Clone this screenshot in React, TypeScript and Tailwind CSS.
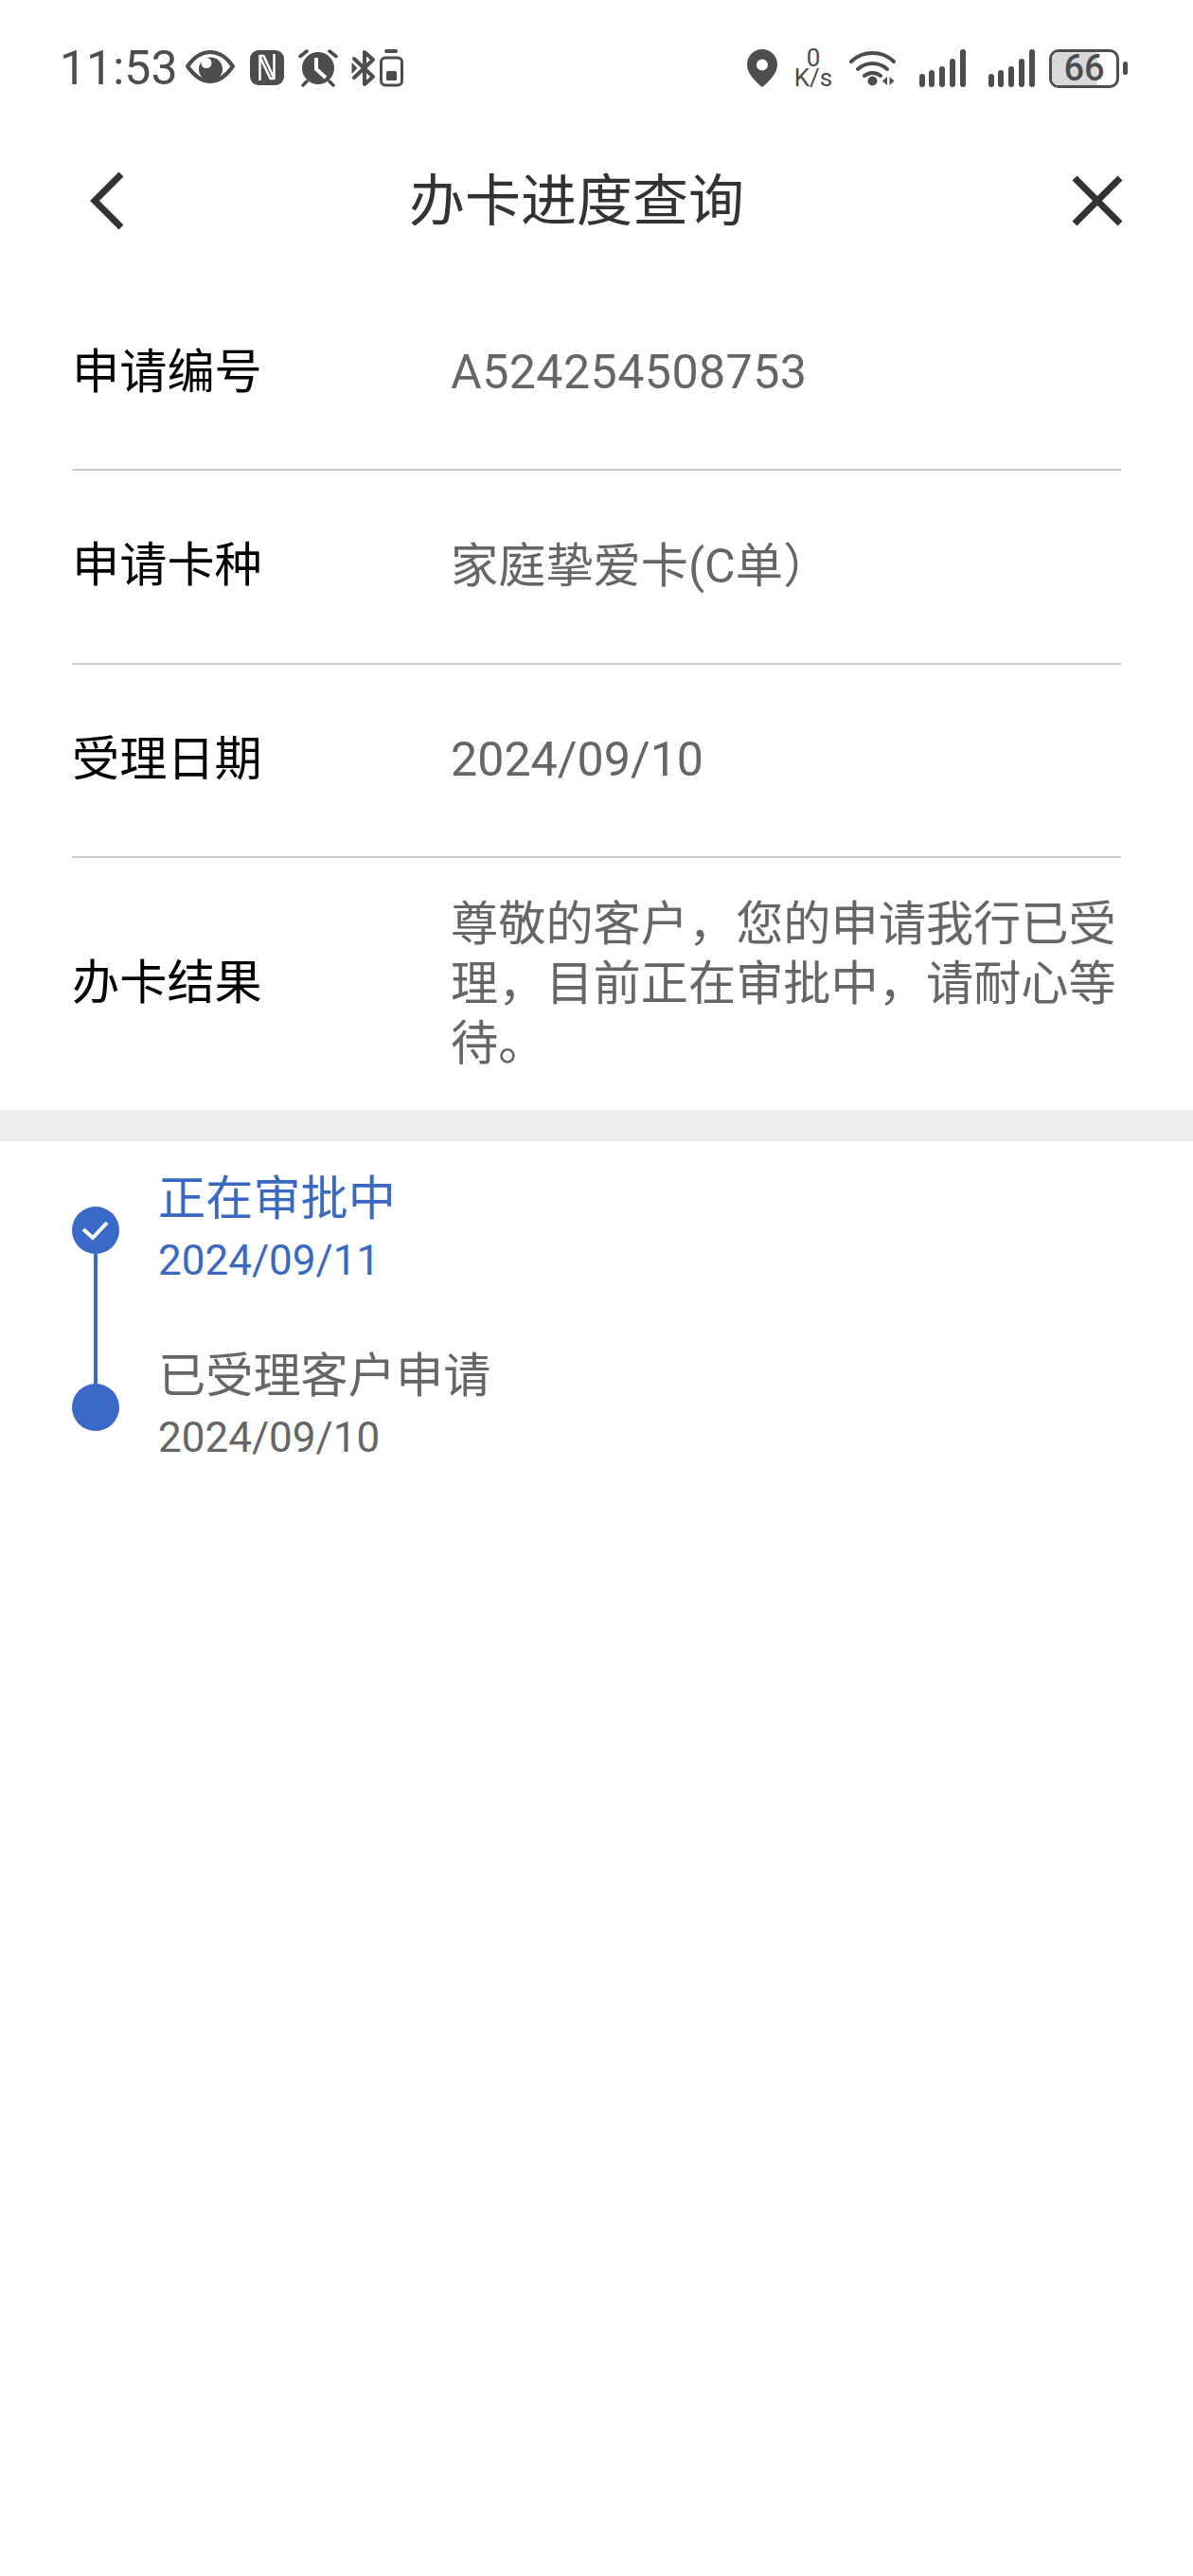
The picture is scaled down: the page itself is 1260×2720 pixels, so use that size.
import React from "react";

const FONT = "font-['Roboto','Noto_Sans_CJK_SC',sans-serif]";
const INK = "#4d4d4d";

function Eye() {
  return (
    <svg width="54" height="40" viewBox="0 0 54 40" className="ml-[7px]">
      <path d="M3 18C10 8 18 3 27 3S44 8 51 18C44 28 36 34 27 34S10 28 3 18Z" fill="none" stroke={INK} strokeWidth="4" strokeLinejoin="round" />
      <circle cx="27.500" cy="21" r="12.500" fill={INK} />
      <circle cx="23" cy="14.500" r="5.500" fill="#fff" />
    </svg>
  );
}

function Nfc() {
  return (
    <svg width="36" height="40" viewBox="0 0 36 40" className="ml-[15px]">
      <rect x="0" y="1" width="36" height="37" rx="9" fill={INK} />
      <path d="M10.500 33V7h4l11 24M25.500 5v26h-4L10.500 8" fill="none" stroke="#fff" strokeWidth="2.500" strokeLinejoin="round" />
    </svg>
  );
}

function Alarm() {
  return (
    <svg width="42" height="40" viewBox="0 0 42 40" className="ml-[15px]">
      <circle cx="21" cy="20" r="17" fill={INK} />
      <path d="M2 7.500l7-5.500M40 7.500l-7-5.500M5 38l4-4M37 38l-4-4" stroke={INK} strokeWidth="3.500" strokeLinecap="round" />
      <path d="M19 9v12l10 9" fill="none" stroke="#fff" strokeWidth="4" strokeLinejoin="round" />
    </svg>
  );
}

function BluetoothBattery() {
  return (
    <svg width="56" height="40" viewBox="0 0 56 40" className="ml-[14px]">
      <path d="M3 10l20 19-9 8V3l9 8L3 30" fill="none" stroke={INK} strokeWidth="4" strokeLinejoin="round" strokeLinecap="round" />
      <path d="M0.500 14v12l6-6Z" fill={INK} />
      <rect x="35" y="0" width="14" height="4" rx="2" fill={INK} />
      <rect x="31.500" y="9" width="22" height="29" rx="4.500" fill="none" stroke={INK} strokeWidth="3" />
      <rect x="37" y="23" width="11" height="10" rx="1.500" fill={INK} />
    </svg>
  );
}

function Pin() {
  return (
    <svg width="32" height="40" viewBox="0 0 32 40">
      <path fillRule="evenodd" d="M16 0C7 0 0 7 0 16c0 10 9 18 16 24 7-6 16-14 16-24C32 7 25 0 16 0Zm0 10.500a6 6 0 1 1 0 12 6 6 0 0 1 0-12Z" fill={INK} />
    </svg>
  );
}

function Wifi() {
  return (
    <svg width="50" height="40" viewBox="0 0 50 40" className="ml-[18px]">
      <path d="M2 13C14 1 35 1 47 13M9 21c9-8 22-8 31 0M16 28c5-4 12-4 17 0" fill="none" stroke={INK} strokeWidth="4" strokeLinecap="round" />
      <circle cx="24.500" cy="33.500" r="5" fill={INK} />
      <path d="M40 29v9l-5-4.500ZM42.500 29v9l5-4.500Z" fill={INK} />
    </svg>
  );
}

function Signal({ className }: { className: string }) {
  const bars = [
    [0, 26, 14],
    [10, 22, 18],
    [21, 18, 22],
    [32, 10, 30],
    [43, 0, 40],
  ];
  return (
    <svg width="49" height="40" viewBox="0 0 49 40" className={className}>
      {bars.map(([x, y, h]) => (
        <rect key={x} x={x} y={y} width="6" height={h} rx="3" fill={INK} />
      ))}
    </svg>
  );
}

function Battery() {
  return (
    <div className="ml-[15px] flex h-[41px] w-[84px] items-center">
      <div className="relative flex h-[41px] w-[74px] items-center justify-center overflow-hidden rounded-[10px] border-[3.500px] border-[#4d4d4d] bg-white">
        <div className="absolute inset-y-0 left-0 w-[48px] bg-[#d9d9d9]" />
        <span className="relative text-[38px] font-medium leading-none text-[#4d4d4d]">66</span>
      </div>
      <div className="ml-[4px] h-[14px] w-[5px] rounded-full bg-[#4d4d4d]" />
    </div>
  );
}

function StatusBar() {
  return (
    <div className="flex h-[143px] items-start justify-between pl-[63px] pr-[68px] pt-[52px]">
      <div className="flex h-[40px] items-center">
        <span className="text-[50px] leading-none text-[#4d4d4d]">11:53</span>
        <Eye />
        <Nfc />
        <Alarm />
        <BluetoothBattery />
      </div>
      <div className="flex h-[40px] items-center">
        <Pin />
        <div className="ml-[18px] flex w-[40px] flex-col items-center text-[#4d4d4d]">
          <span className="text-[26px] leading-[21px]">0</span>
          <span className="text-[26px] leading-[21px]">K/s</span>
        </div>
        <Wifi />
        <Signal className="ml-[24px]" />
        <Signal className="ml-[24px]" />
        <Battery />
      </div>
    </div>
  );
}

function Header() {
  return (
    <div className="flex h-[138px] items-center pl-[94px] pr-[74px]">
      <svg width="38" height="62" viewBox="0 0 38 62">
        <path d="M34 3 6 31l28 28" fill="none" stroke="#333" strokeWidth="7" />
      </svg>
      <h1 className="ml-[300px] flex-1 text-[59px] font-normal leading-none text-[#333]">办卡进度查询</h1>
      <svg width="54" height="54" viewBox="0 0 54 54">
        <path d="M3 3l48 48M51 3 3 51" fill="none" stroke="#333" strokeWidth="7" />
      </svg>
    </div>
  );
}

function Row({ label, value, last, spaced }: { label: string; value: string; last?: boolean; spaced?: boolean }) {
  return (
    <div className={`mx-[76px] flex items-center pb-[2px] ${last ? "h-[266px]" : "h-[204.500px] border-b-2 border-[#cccccc]"}`}>
      <div className="w-[400px] shrink-0 text-[50.200px] leading-none text-black">{label}</div>
      <div className={`text-[50.200px] leading-[63px] text-[#666666] ${spaced ? "tracking-[0.4px]" : ""}`}>{value}</div>
    </div>
  );
}

function Step({ title, date, color, children }: { title: string; date: string; color: string; children: React.ReactNode }) {
  return (
    <div className="flex h-[187px] pl-[76px]">
      <div className="relative w-[50px] shrink-0 pt-[50px]">{children}</div>
      <div className={`ml-[41px] pt-[12px] ${color}`}>
        <div className="text-[50.200px] leading-[60px]">{title}</div>
        <div className="mt-[9px] text-[44px] leading-[52px]">{date}</div>
      </div>
    </div>
  );
}

export default function App() {
  return (
    <div className={`min-h-[2720px] w-[1260px] bg-white ${FONT}`}>
      <StatusBar />
      <Header />
      <div className="mt-[11.500px]">
        <Row label="申请编号" value="A524254508753" spaced />
        <Row label="申请卡种" value="家庭挚爱卡(C单）" />
        <Row label="受理日期" value="2024/09/10" />
        <Row label="办卡结果" value="尊敬的客户，您的申请我行已受理，目前正在审批中，请耐心等待。" last />
      </div>
      <div className="h-[33px] bg-[#eeeeee]" />
      <div className="pt-[19px]">
        <Step title="正在审批中" date="2024/09/11" color="text-[#3a69c4]">
          <div className="flex h-[50px] w-[50px] items-center justify-center rounded-full bg-[#3a69c9]">
            <svg width="34" height="26" viewBox="0 0 34 26">
              <path d="M4 12l10 9L29 5" fill="none" stroke="#fff" strokeWidth="4" />
            </svg>
          </div>
          <div className="absolute left-[23px] top-[100px] h-[137px] w-[4px] bg-[#3a69c4]" />
        </Step>
        <Step title="已受理客户申请" date="2024/09/10" color="text-[#666666]">
          <div className="h-[50px] w-[50px] rounded-full bg-[#3a69c9]" />
        </Step>
      </div>
    </div>
  );
}
